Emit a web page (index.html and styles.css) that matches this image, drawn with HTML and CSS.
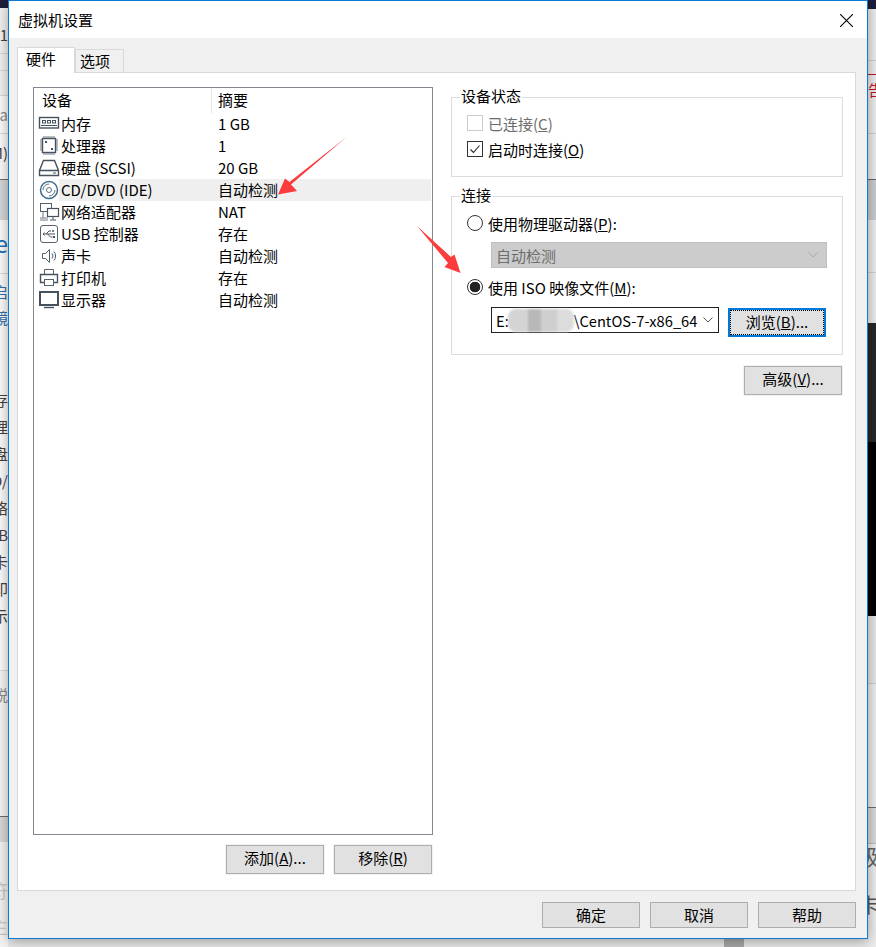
FILE: index.html
```html
<!DOCTYPE html>
<html lang="zh-CN">
<head>
<meta charset="utf-8">
<title>虚拟机设置</title>
<link rel="stylesheet" href="styles.css">
</head>
<body>
<div class="desk">
  <div class="strip strip-left">
    <span class="frag gap-a">1</span>
    <span class="frag frag-muted gap-b">a</span>
    <span class="frag gap-c">M)</span>
    <span class="frag frag-big gap-d">Ce</span>
    <span class="frag frag-blue gap-e">启</span>
    <span class="frag frag-blue gap-f">镜</span>
    <span class="frag gap-g">存</span>
    <span class="frag frag-list">理</span>
    <span class="frag frag-list">盘</span>
    <span class="frag frag-list">D/</span>
    <span class="frag frag-list">络</span>
    <span class="frag frag-list">B</span>
    <span class="frag frag-list">卡</span>
    <span class="frag frag-list">印</span>
    <span class="frag frag-list">示</span>
    <span class="frag frag-muted gap-h">锐</span>
    <span class="frag frag-ghost gap-i">符</span>
    <span class="frag frag-ghost gap-j">主</span>
  </div>
  <div class="strip strip-right">
    <span class="rfrag rfrag-red">告</span>
    <span class="rfrag rfrag-gray">级</span>
    <span class="rfrag rfrag-gray2">卡</span>
  </div>
  <div class="under-block"></div>

  <section class="dialog">
    <header class="titlebar">
      <h1 class="title">虚拟机设置</h1>
      <svg class="close" viewBox="0 0 12 12"><path d="M0 0 12 12M12 0 0 12"/></svg>
    </header>

    <div class="tabs">
      <div class="tab tab-active">硬件</div>
      <div class="tab">选项</div>
    </div>

    <div class="panel">
      <div class="left-col">
        <div class="list">
          <div class="list-head">
            <span class="head-device">设备</span>
            <span class="head-summary">摘要</span>
          </div>

          <div class="row">
            <svg class="icon" viewBox="0 0 22 22"><rect x="1.500" y="4.500" width="19" height="10.500" class="s"/><rect x="4.500" y="7.500" width="3" height="2.500" class="s2"/><rect x="9.500" y="7.500" width="3" height="2.500" class="s2"/><rect x="14.500" y="7.500" width="3" height="2.500" class="s2"/><path class="s2" d="M3 12.500h16"/></svg>
            <div class="row-body"><span class="name">内存</span><span class="value">1 GB</span></div>
          </div>
          <div class="row">
            <svg class="icon" viewBox="0 0 22 22"><rect x="4.500" y="3.500" width="13" height="14" class="s"/><path class="pins" d="M6 1v2M8 1v2M10 1v2M12 1v2M14 1v2M16 1v2M6 18v2M8 18v2M10 18v2M12 18v2M14 18v2M16 18v2M2 5h2M2 7h2M2 9h2M2 11h2M2 13h2M2 15h2M18 5h2M18 7h2M18 9h2M18 11h2M18 13h2M18 15h2"/><rect x="7" y="6" width="2" height="2" class="f"/><rect x="13" y="13" width="2" height="2" class="f"/></svg>
            <div class="row-body"><span class="name">处理器</span><span class="value">1</span></div>
          </div>
          <div class="row">
            <svg class="icon" viewBox="0 0 22 22"><path class="s" d="M5.500 3.500h11l4 10v5h-19v-5zM1.500 13.500h19"/><path class="s2" d="M15 16h3"/></svg>
            <div class="row-body"><span class="name">硬盘 (SCSI)</span><span class="value">20 GB</span></div>
          </div>
          <div class="row">
            <svg class="icon" viewBox="0 0 22 22"><circle cx="11" cy="11" r="8.500" class="cd"/><circle cx="11" cy="11" r="2.500" class="cd-thin"/><path class="cd-thin" d="M11 5a6 6 0 0 0-6 6M11 17a6 6 0 0 0 6-6"/></svg>
            <div class="row-body row-selected"><span class="name">CD/DVD (IDE)</span><span class="value">自动检测</span></div>
          </div>
          <div class="row">
            <svg class="icon" viewBox="0 0 22 22"><rect x="2.500" y="2.500" width="11" height="8" class="s-thin"/><path class="pins" d="M2 17h8M2 19h8M5 11v6"/><rect x="9.500" y="7.500" width="11" height="8" class="s-fill"/><path class="s2" d="M15 15.500v3M12 19h6"/></svg>
            <div class="row-body"><span class="name">网络适配器</span><span class="value">NAT</span></div>
          </div>
          <div class="row">
            <svg class="icon" viewBox="0 0 22 22"><rect x="2.500" y="2.500" width="17" height="17" rx="2.500" class="s-thin"/><path class="usb" d="M5 11h12M8 11l3-3h2M9.500 11l3 3h2M5 11l1.500-1.500M5 11l1.500 1.500"/><circle cx="15" cy="8" r="1" class="f"/><rect x="15" y="13" width="2" height="2" class="f"/></svg>
            <div class="row-body"><span class="name">USB 控制器</span><span class="value">存在</span></div>
          </div>
          <div class="row">
            <svg class="icon" viewBox="0 0 22 22"><path class="s-thin" d="M4.500 8.500h3l4-4v13l-4-4h-3z"/><path class="s-thin" d="M14 8.500a4 4 0 0 1 0 5M16 6.500a7 7 0 0 1 0 9"/></svg>
            <div class="row-body"><span class="name">声卡</span><span class="value">自动检测</span></div>
          </div>
          <div class="row">
            <svg class="icon" viewBox="0 0 22 22"><path class="s-thin" d="M6.500 7.500v-5h9v5"/><path class="s" d="M6 15.500H2.500v-8h17v8H16"/><rect x="6.500" y="12.500" width="9" height="6" class="s-thin"/></svg>
            <div class="row-body"><span class="name">打印机</span><span class="value">存在</span></div>
          </div>
          <div class="row">
            <svg class="icon" viewBox="0 0 22 22"><rect x="2" y="3" width="18" height="13" class="monitor"/><path class="s" d="M6 18.500h10"/></svg>
            <div class="row-body"><span class="name">显示器</span><span class="value">自动检测</span></div>
          </div>
        </div>

        <div class="list-actions">
          <button class="btn">添加(<u>A</u>)...</button>
          <button class="btn">移除(<u>R</u>)</button>
        </div>
      </div>

      <div class="right-col">
        <fieldset class="group group-state">
          <legend>设备状态</legend>
          <label class="opt opt-disabled"><span class="check check-off"></span>已连接(<u>C</u>)</label>
          <label class="opt"><span class="check"><svg viewBox="0 0 14 14"><path d="M2.500 7.500 5.500 10.500 11.500 3.500"/></svg></span>启动时连接(<u>O</u>)</label>
        </fieldset>

        <fieldset class="group group-conn">
          <legend>连接</legend>
          <label class="opt"><span class="radio"></span>使用物理驱动器(<u>P</u>):</label>
          <div class="select select-off">
            <span>自动检测</span>
            <svg class="chev" viewBox="0 0 10 6"><path d="M.5.500 5 5 9.500.5"/></svg>
          </div>
          <label class="opt opt-iso"><span class="radio radio-on"></span>使用 ISO 映像文件(<u>M</u>):</label>
          <div class="iso-row">
            <div class="select select-iso">
              <span class="iso-text">E:<span class="smudge"></span>\CentOS-7-x86_64</span>
              <svg class="chev chev-dark" viewBox="0 0 10 6"><path d="M.5.500 5 5 9.500.5"/></svg>
            </div>
            <button class="btn btn-focus"><span class="focus-ring">浏览(<u>B</u>)...</span></button>
          </div>
        </fieldset>

        <div class="advanced-row"><button class="btn">高级(<u>V</u>)...</button></div>
      </div>
    </div>

    <footer class="footer">
      <button class="btn btn-foot">确定</button>
      <button class="btn btn-foot">取消</button>
      <button class="btn btn-foot">帮助</button>
    </footer>
  </section>

  <svg class="arrows" viewBox="0 0 876 947">
    <path d="M346.500 137 291 184.500 297 191 278 194.500 285 178.500 289.500 182z"/>
    <path d="M417 226 451 257 454.500 254.500 460.500 273 444.500 267 448 263z"/>
  </svg>
</div>
</body>
</html>
```
FILE: styles.css
```css
* { box-sizing: border-box; }
html, body { margin: 0; padding: 0; }
body {
  font-family: "Noto Sans CJK SC", "Noto Sans", sans-serif;
  font-size: 15px;
  color: #000;
}
u { text-underline-offset: 1px; text-decoration-thickness: 1px; }

/* background desktop */
.desk {
  position: relative;
  width: 876px;
  height: 947px;
  overflow: hidden;
  display: flex;
  justify-content: space-between;
  background: #e9e9e9;
}
.strip {
  width: 8px;
  height: 947px;
  overflow: hidden;
  display: flex;
  flex-direction: column;
  color: #4a4038;
}
.strip-left {
  align-items: flex-end;
  background: linear-gradient(to bottom,
    #1c1e3b 0 8px, #f2f2f2 8px 53px, #d8d8d8 53px 54px, #f2f2f2 54px 70px, #d8d8d8 70px 71px,
    #f2f2f2 71px 95px, #d8d8d8 95px 96px, #fbfbfb 96px 133px, #d8d8d8 133px 134px,
    #fbfbfb 134px 179px, #6e6e6e 179px 180px, #d4d6d8 180px 220px, #fbfbfb 220px 273px,
    #dcdcdc 273px 274px, #fbfbfb 274px 670px, #dcdcdc 670px 671px, #f6f6f6 671px 816px,
    #6e6e6e 816px 817px, #d8d8d8 817px 842px, #f4f4f4 842px);
}
.strip-right {
  background: linear-gradient(to bottom,
    #1c1e3b 0 9px, #ececec 9px 60px, #cfcfcf 60px 61px, #ececec 61px 74px, #c41230 74px 75px,
    #ececec 75px 133px, #d0d0d0 133px 134px, #ececec 134px 179px, #666 179px 180px,
    #c9cbcd 180px 220px, #ececec 220px 272px, #d0d0d0 272px 273px, #ececec 273px 323px,
    #282828 323px 442px, #000 442px 616px, #e6e6e6 616px 683px, #cfcfcf 683px 684px,
    #ececec 684px 807px, #6e6e6e 807px 808px, #d8d8d8 808px 843px, #bdbdbd 843px 844px, #ececec 844px);
}
.frag {
  flex: none;
  height: 18px;
  line-height: 18px;
  white-space: nowrap;
}
.frag-list { margin-top: 9px; }
.frag-muted { color: #8b8b8b; }
.frag-big { font-size: 24px; color: #1f6fb2; }
.frag-blue { color: #2f6fa8; }
.frag-ghost { color: #c9c9c9; font-size: 18px; }
.gap-a { margin-top: 26px; }
.gap-b { margin-top: 62px; }
.gap-c { margin-top: 20px; }
.gap-d { margin-top: 72px; }
.gap-e { margin-top: 31px; }
.gap-f { margin-top: 8px; }
.gap-g { margin-top: 64px; }
.gap-h { margin-top: 61px; }
.gap-i { margin-top: 177px; }
.gap-j { margin-top: 18px; }
.rfrag { display: block; white-space: nowrap; height: 20px; line-height: 20px; }
.rfrag-red { margin-top: 80px; color: #c41230; }
.rfrag-gray { margin-top: 745px; color: #666; font-size: 22px; margin-left: -11px; }
.rfrag-gray2 { margin-top: 30px; color: #555; font-size: 20px; margin-left: -9px; }
.under-block {
  position: absolute;
  left: 724px;
  bottom: 0;
  width: 20px;
  height: 9px;
  background: #a9a9a9;
}

/* dialog window */
.dialog {
  position: absolute;
  left: 8px;
  top: 0;
  width: 860px;
  height: 939px;
  display: flex;
  flex-direction: column;
  background: #f0f0f0;
  border: 1px solid #0f7ad5;
  box-shadow: 0 2px 12px rgba(0, 0, 0, .35);
}
.titlebar {
  flex: none;
  height: 37px;
  background: #fff;
  display: flex;
  align-items: center;
  justify-content: space-between;
  padding: 1px 14px 0 9px;
}
.title { margin: 0; font-size: 15px; font-weight: 400; line-height: 22px; }
.close { width: 13px; height: 13px; fill: none; stroke: #000; stroke-width: 1; }

.tabs {
  flex: none;
  height: 34px;
  padding: 9px 0 0 8px;
  display: flex;
  align-items: flex-end;
  position: relative;
  z-index: 1;
}
.tab {
  width: 49px;
  height: 23px;
  background: #f0f0f0;
  border: 1px solid #d9d9d9;
  border-bottom: 0;
  line-height: 21px;
  padding-left: 4px;
}
.tab-active {
  width: 58px;
  height: 26px;
  margin-bottom: -1px;
  background: #fff;
  line-height: 22px;
  padding-left: 8px;
}

.panel {
  flex: none;
  width: 839px;
  height: 819px;
  margin-left: 8px;
  background: #fff;
  border: 1px solid #d9d9d9;
  padding: 14px 0 0 15px;
  display: grid;
  grid-template-columns: 400px 392px;
  column-gap: 18px;
  align-items: start;
}

/* device list */
.list {
  height: 748px;
  border: 1px solid #828790;
}
.list-head {
  height: 25px;
  display: flex;
  align-items: flex-start;
  line-height: 24px;
}
.head-device { width: 177px; padding-left: 8px; flex: none; }
.head-summary {
  flex: none;
  padding-left: 6px;
  border-left: 1px solid #e5e5e5;
  height: 25px;
  line-height: 24px;
}
.row {
  height: 22px;
  display: flex;
  padding-left: 4px;
  padding-right: 1px;
}
.icon { width: 22px; height: 22px; flex: none; margin-right: -1px; fill: none; }
.row-body {
  flex: 1;
  display: flex;
  padding-left: 2px;
  line-height: 22px;
  white-space: nowrap;
}
.row-selected { background: #efefef; }
.name { width: 157px; flex: none; }
.s { fill: none; stroke: #46535e; stroke-width: 1.4; }
.s2 { fill: none; stroke: #46535e; stroke-width: 1; }
.s-thin { fill: none; stroke: #55626d; stroke-width: 1; }
.s-fill { fill: #fff; stroke: #46535e; stroke-width: 1.2; }
.f { fill: #46535e; stroke: none; }
.pins { fill: none; stroke: #6e7a84; stroke-width: 1; }
.usb { fill: none; stroke: #46535e; stroke-width: 1; }
.cd { fill: #fff; stroke: #3c6f8e; stroke-width: 1.5; }
.cd-thin { fill: none; stroke: #5a7485; stroke-width: 1; }
.monitor { fill: #fff; stroke: #46535e; stroke-width: 2; }

.list-actions {
  display: flex;
  justify-content: flex-end;
  gap: 10px;
  margin-top: 10px;
  padding-right: 1px;
}

/* buttons */
.btn {
  width: 98px;
  height: 29px;
  padding: 0 0 3px;
  font: inherit;
  color: #000;
  line-height: 22px;
  background: #e1e1e1;
  border: 1px solid #adadad;
  outline: 1px solid #f2f2f2;
}
.btn-foot { height: 26px; outline: 0; padding: 0; line-height: 22px; }
.btn-focus {
  height: 29px;
  margin-top: 1px;
  border: 2px solid #0078d7;
  outline: 0;
  padding: 0;
}
.focus-ring {
  display: block;
  height: 25px;
  line-height: 21px;
  border: 1px dotted #000;
}

/* right column */
.group {
  margin: 0;
  padding: 0 15px;
  width: 392px;
  border: 1px solid #dcdcdc;
  min-width: 0;
}
legend {
  margin-left: -7px;
  padding: 0 1px;
  height: 20px;
  line-height: 18px;
}
.group-state { height: 90px; padding-top: 3px; }
.group-conn { height: 169px; margin-top: 9px; padding-top: 4px; }
.opt {
  display: flex;
  align-items: center;
  height: 26px;
  white-space: nowrap;
}
.opt-disabled { color: #6d6d6d; }
.opt-iso { margin-top: 6px; }
.check {
  flex: none;
  width: 16px;
  height: 16px;
  margin-right: 5px;
  border: 1px solid #333;
  background: #fff;
  display: flex;
}
.check svg { width: 14px; height: 14px; fill: none; stroke: #222; stroke-width: 1.1; }
.check-off { border-color: #ccc; }
.radio {
  flex: none;
  width: 16px;
  height: 16px;
  margin-right: 5px;
  border: 1px solid #333;
  border-radius: 50%;
  background: #fff;
}
.radio-on {
  background: radial-gradient(circle, #222 0 5px, #fff 5.6px);
}
.select {
  position: relative;
  height: 26px;
  margin-left: 24px;
  display: flex;
  align-items: center;
  justify-content: space-between;
  padding-left: 4px;
  padding-right: 8px;
}
.select-off {
  margin-top: 6px;
  width: 336px;
  background: #ccc;
  border: 1px solid #bfbfbf;
  color: #6d6d6d;
}
.chev { width: 10px; height: 6px; fill: none; stroke: #a9a9a9; stroke-width: 1; }
.chev-dark { stroke: #555; }
.iso-row {
  display: flex;
  height: 30px;
  margin-top: 7px;
  align-items: flex-start;
  gap: 9px;
}
.select-iso {
  width: 228px;
  background: #fff;
  border: 1px solid #222;
  flex: none;
  white-space: nowrap;
  font-size: 14.67px;
  padding-right: 5px;
}
.iso-text { display: flex; align-items: center; }
.smudge {
  display: block;
  width: 66px;
  height: 23px;
  margin-left: -1px;
  border-radius: 8px;
  filter: blur(1.2px);
  background: linear-gradient(to right, #d4d4d4 0 30%, #b8b8b8 30% 50%, #cfcfcf 50% 75%, #dcdcdc 75%);
}
.advanced-row {
  display: flex;
  justify-content: flex-end;
  margin-top: 11px;
  padding-right: 1px;
}

/* footer */
.footer {
  flex: 1;
  display: flex;
  justify-content: flex-end;
  gap: 10px;
  padding: 11px 11px 0 0;
}

/* annotation arrows */
.arrows {
  position: absolute;
  left: 0;
  top: 0;
  width: 876px;
  height: 947px;
  fill: #fb3c3c;
  pointer-events: none;
}
```
